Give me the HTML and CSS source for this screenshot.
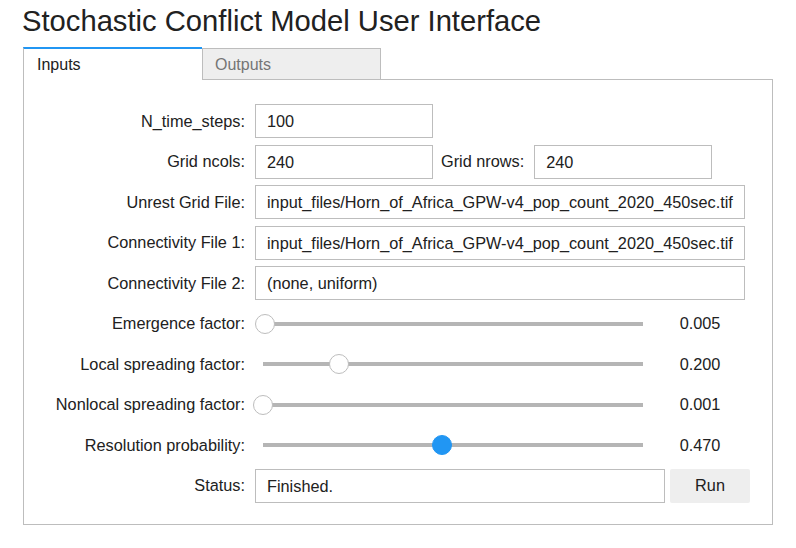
FILE: index.html
```html
<!DOCTYPE html>
<html>
<head>
<meta charset="utf-8">
<link rel="stylesheet" href="styles.css">
</head>
<body>
<h1 class="title">Stochastic Conflict Model User Interface</h1>
<div class="tabs">
  <div class="tabbar">
    <div class="tab tab-active">Inputs</div>
    <div class="tab tab-idle">Outputs</div>
  </div>
  <div class="panel">
    <div class="row">
      <label class="lbl">N_time_steps:</label>
      <div class="field w-short">100</div>
    </div>
    <div class="row">
      <label class="lbl">Grid ncols:</label>
      <div class="field w-short">240</div>
      <label class="lbl-inline">Grid nrows:</label>
      <div class="field w-short">240</div>
    </div>
    <div class="row">
      <label class="lbl">Unrest Grid File:</label>
      <div class="field w-long">input_files/Horn_of_Africa_GPW-v4_pop_count_2020_450sec.tif</div>
    </div>
    <div class="row">
      <label class="lbl">Connectivity File 1:</label>
      <div class="field w-long">input_files/Horn_of_Africa_GPW-v4_pop_count_2020_450sec.tif</div>
    </div>
    <div class="row">
      <label class="lbl">Connectivity File 2:</label>
      <div class="field w-long">(none, uniform)</div>
    </div>
    <div class="row">
      <label class="lbl">Emergence factor:</label>
      <div class="slider"><div class="track"><span class="thumb" style="left:0.5%"></span></div></div>
      <div class="readout">0.005</div>
    </div>
    <div class="row">
      <label class="lbl">Local spreading factor:</label>
      <div class="slider"><div class="track"><span class="thumb" style="left:20%"></span></div></div>
      <div class="readout">0.200</div>
    </div>
    <div class="row">
      <label class="lbl">Nonlocal spreading factor:</label>
      <div class="slider"><div class="track"><span class="thumb" style="left:0.1%"></span></div></div>
      <div class="readout">0.001</div>
    </div>
    <div class="row">
      <label class="lbl">Resolution probability:</label>
      <div class="slider"><div class="track"><span class="thumb thumb-active" style="left:47%"></span></div></div>
      <div class="readout">0.470</div>
    </div>
    <div class="row">
      <label class="lbl">Status:</label>
      <div class="field w-status">Finished.</div>
      <button class="btn">Run</button>
    </div>
  </div>
</div>
</body>
</html>
```

FILE: styles.css
```css
html, body {
  margin: 0;
  padding: 0;
  background: #ffffff;
}
body {
  font-family: "Liberation Sans", Arial, sans-serif;
  color: #212121;
  font-size: 16.3px;
}
.title {
  margin: 0 0 9px 22px;
  padding-top: 4px;
  font-size: 29.2px;
  line-height: 34px;
  font-weight: normal;
  color: #212121;
}
.tabs {
  margin-left: 23px;
  width: 750px;
}
.tabbar {
  display: flex;
  align-items: flex-end;
  height: 32px;
}
.tab {
  box-sizing: border-box;
  font-size: 16px;
}
.tab-active {
  position: relative;
  z-index: 1;
  width: 179px;
  height: 33px;
  margin-bottom: -1px;
  border-top: 2px solid #2196f3;
  border-left: 1px solid #bdbdbd;
  background: #ffffff;
  padding-left: 13px;
  line-height: 32px;
  color: #212121;
}
.tab-idle {
  width: 179px;
  height: 31px;
  border: 1px solid #bdbdbd;
  border-bottom: none;
  background: #eeeeee;
  padding-left: 12px;
  line-height: 32px;
  color: #757575;
}
.panel {
  box-sizing: border-box;
  width: 750px;
  border: 1px solid #bdbdbd;
  padding: 24px 18px 21px;
}
.row {
  display: flex;
  align-items: center;
  height: 34px;
  margin-bottom: 6.5px;
}
.row:last-child {
  margin-bottom: 0;
}
.lbl {
  width: 203px;
  flex: none;
  text-align: right;
  margin-right: 10px;
  white-space: nowrap;
}
.lbl-inline {
  margin-left: 8px;
  margin-right: 10px;
  white-space: nowrap;
}
.field {
  box-sizing: border-box;
  height: 34px;
  border: 1px solid #bdbdbd;
  padding: 0 11px;
  line-height: 32px;
  white-space: nowrap;
  overflow: hidden;
  flex: none;
}
.w-short { width: 178px; }
.w-long { width: 490px; }
.w-status { width: 410px; }
.slider {
  flex: none;
  width: 407px;
  height: 34px;
  display: flex;
  align-items: center;
}
.track {
  position: relative;
  margin-left: 8px;
  width: 380px;
  height: 4px;
  background: #b5b5b5;
}
.thumb {
  position: absolute;
  top: 50%;
  width: 20px;
  height: 20px;
  box-sizing: border-box;
  border-radius: 50%;
  background: #ffffff;
  border: 1px solid #bdbdbd;
  transform: translate(-50%, -50%);
}
.thumb-active {
  background: #2196f3;
  border-color: #2196f3;
}
.readout {
  width: 76px;
  text-align: center;
}
.btn {
  flex: none;
  margin-left: 5px;
  width: 80px;
  height: 34px;
  border: none;
  border-radius: 2px;
  background: #eeeeee;
  font-family: "Liberation Sans", Arial, sans-serif;
  font-size: 16.3px;
  color: #212121;
  padding: 0;
}
```
